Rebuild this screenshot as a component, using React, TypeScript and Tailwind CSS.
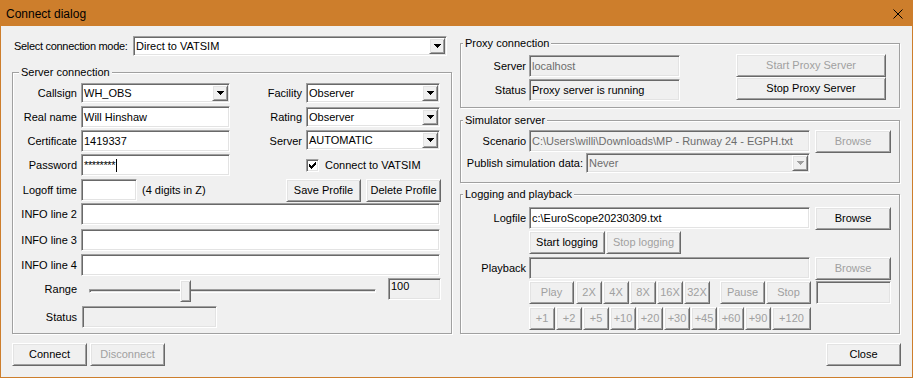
import type { ReactNode } from "react";

// classic win32 3d edges
const sunken =
  "border border-t-[#a0a0a0] border-l-[#a0a0a0] border-r-white border-b-white shadow-[inset_1px_1px_0_#696969,inset_-1px_-1px_0_#e3e3e3]";
const raised =
  "border border-t-white border-l-white border-r-[#696969] border-b-[#696969] shadow-[inset_1px_1px_0_#e3e3e3,inset_-1px_-1px_0_#a0a0a0]";

function Arrow({ dim }: { dim?: boolean }) {
  return (
    <svg width="7" height="4" viewBox="0 0 7 4" shapeRendering="crispEdges">
      <path d="M0 0h7v1H0zM1 1h5v1H1zM2 2h3v1H2zM3 3h1v1H3z" fill={dim ? "#a0a0a0" : "#000"} />
    </svg>
  );
}

function Edit({
  className = "",
  value = "",
  mode = "normal",
  children,
}: {
  className?: string;
  value?: string;
  mode?: "normal" | "disabled" | "readonly";
  children?: ReactNode;
}) {
  const look =
    mode === "normal" ? "bg-white" : mode === "disabled" ? "bg-[#f0f0f0] text-[#6d6d6d]" : "bg-[#f0f0f0]";
  return (
    <div className={`${sunken} ${look} h-[22px] flex items-center pl-[2px] whitespace-nowrap overflow-hidden ${className}`}>
      {value}
      {children}
    </div>
  );
}

function Combo({ className = "", value, disabled }: { className?: string; value: string; disabled?: boolean }) {
  return (
    <div
      className={`${sunken} ${disabled ? "bg-[#f0f0f0] text-[#6d6d6d]" : "bg-white"} h-[20px] flex p-[1px] ${className}`}
    >
      <div className="flex-1 flex items-center pl-[1px] whitespace-nowrap overflow-hidden">{value}</div>
      <div className={`${raised} w-[16px] bg-[#f0f0f0] flex items-center justify-center`}>
        <Arrow dim={disabled} />
      </div>
    </div>
  );
}

function Btn({ className = "", label, disabled }: { className?: string; label: string; disabled?: boolean }) {
  return (
    <button
      type="button"
      disabled={disabled}
      className={`${raised} h-[23px] bg-[#f0f0f0] flex items-center justify-center whitespace-nowrap shrink-0 ${
        disabled ? "text-[#a0a0a0]" : "text-black"
      } ${className}`}
    >
      {label}
    </button>
  );
}

function Group({
  title,
  className = "",
  legend,
  children,
}: {
  title: string;
  className?: string;
  legend: string;
  children: ReactNode;
}) {
  return (
    <div className={`relative border border-[#a0a0a0] shadow-[inset_1px_1px_0_#fff,1px_1px_0_#fff] ${className}`}>
      <span className={`absolute -top-[7px] ${legend} px-[2px] bg-[#f0f0f0] leading-[13px] whitespace-nowrap`}>
        {title}
      </span>
      {children}
    </div>
  );
}

function Lbl({ className = "", children }: { className?: string; children: ReactNode }) {
  return <span className={`text-right whitespace-nowrap self-center shrink-0 ${className}`}>{children}</span>;
}

export default function App() {
  return (
    <div className="w-[913px] h-[378px] flex flex-col font-['Liberation_Sans',Arial,sans-serif] text-[11px] leading-[13px] text-black select-none">
      <div className="h-[26px] shrink-0 bg-[#cd7e2c] flex items-center justify-between pl-[6px] pr-[10px]">
        <span className="text-[12px] pt-[2px]">Connect dialog</span>
        <svg width="10" height="10" viewBox="0 0 10 10" className="mt-[2px]">
          <path d="M0.5 0.5L9.5 9.5M9.5 0.5L0.5 9.5" stroke="#000" strokeWidth="1" />
        </svg>
      </div>

      <div className="flex-1 bg-[#f0f0f0] border-x border-b border-[#cd7e2c] flex pl-[11px] pr-[12px] gap-[8px]">
        {/* left column */}
        <div className="w-[440px] flex flex-col">
          <div className="mt-[10px] flex items-center h-[20px]">
            <span className="w-[121px] shrink-0 pl-[2px] whitespace-nowrap tracking-[-0.3px]">Select connection mode:</span>
            <Combo className="w-[314px]" value="Direct to VATSIM" />
          </div>

          <Group title="Server connection" className="mt-[16px] h-[262px]" legend="left-[6px]">
            <div className="mt-[10px] flex h-[20px]">
              <Lbl className="w-[64px] mr-[4px]">Callsign</Lbl>
              <Combo className="w-[149px]" value="WH_OBS" />
              <Lbl className="w-[72px] mr-[4px]">Facility</Lbl>
              <Combo className="w-[134px]" value="Observer" />
            </div>
            <div className="mt-[3px] flex items-start h-[22px]">
              <Lbl className="w-[64px] mr-[4px]">Real name</Lbl>
              <Edit className="w-[149px]" value="Will Hinshaw" />
              <Lbl className="w-[72px] mr-[4px]">Rating</Lbl>
              <Combo className="w-[134px] mt-[1px]" value="Observer" />
            </div>
            <div className="mt-[2px] flex items-start h-[22px]">
              <Lbl className="w-[64px] mr-[4px]">Certificate</Lbl>
              <Edit className="w-[149px]" value="1419337" />
              <Lbl className="w-[72px] mr-[4px]">Server</Lbl>
              <Combo className="w-[134px]" value="AUTOMATIC" />
            </div>
            <div className="mt-[2px] flex items-center h-[22px]">
              <Lbl className="w-[64px] mr-[4px]">Password</Lbl>
              <Edit className="w-[149px]">
                <span className="tracking-[-0.4px]">********</span>
                <span className="w-[1px] h-[13px] bg-black ml-[1px]" />
              </Edit>
              <div className={`${sunken} ml-[76px] w-[13px] h-[13px] bg-white flex items-center justify-center`}>
                <svg width="7" height="7" viewBox="0 0 7 7" shapeRendering="crispEdges">
                  <path
                    d="M6 0h1v3H6zM5 1h1v3H5zM4 2h1v3H4zM3 3h1v3H3zM2 4h1v3H2zM1 3h1v3H1zM0 2h1v3H0z"
                    fill="#000"
                  />
                </svg>
              </div>
              <span className="ml-[6px] whitespace-nowrap">Connect to VATSIM</span>
            </div>
            <div className="mt-[3px] flex items-start h-[23px] pr-[10px]">
              <Lbl className="w-[64px] mr-[4px]">Logoff time</Lbl>
              <Edit className="w-[56px]" />
              <span className="ml-[5px] self-center whitespace-nowrap">(4 digits in Z)</span>
              <Btn className="ml-auto w-[75px]" label="Save Profile" />
              <Btn className="ml-[5px] w-[75px]" label="Delete Profile" />
            </div>
            <div className="mt-[1px] flex h-[22px]">
              <Lbl className="w-[64px] mr-[4px]">INFO line 2</Lbl>
              <Edit className="w-[359px]" />
            </div>
            <div className="mt-[4px] flex h-[22px]">
              <Lbl className="w-[64px] mr-[4px]">INFO line 3</Lbl>
              <Edit className="w-[359px]" />
            </div>
            <div className="mt-[3px] flex h-[22px]">
              <Lbl className="w-[64px] mr-[4px]">INFO line 4</Lbl>
              <Edit className="w-[359px]" />
            </div>
            <div className="mt-[2px] flex items-start h-[22px]">
              <Lbl className="w-[64px] mr-[4px]">Range</Lbl>
              <div className="relative w-[300px] h-[24px] flex items-start">
                <div className={`${sunken} ml-[8px] mt-[11px] w-[287px] h-[4px]`} />
                <div className={`${raised} absolute left-[99px] top-[2px] w-[11px] h-[22px] bg-[#f0f0f0]`} />
              </div>
              <div className={`${sunken} ml-[7px] w-[53px] h-[22px] bg-[#f0f0f0] pl-[2px] pt-[1px]`}>100</div>
            </div>
            <div className="mt-[6px] flex h-[22px]">
              <Lbl className="w-[64px] mr-[5px]">Status</Lbl>
              <Edit className="w-[135px]" mode="readonly" />
            </div>
          </Group>

          <div className="mt-[9px] flex gap-[3px]">
            <Btn className="w-[75px]" label="Connect" />
            <Btn className="w-[75px]" label="Disconnect" disabled />
          </div>
        </div>

        {/* right column */}
        <div className="w-[440px] flex flex-col">
          <Group title="Proxy connection" className="mt-[17px] h-[65px] flex items-start" legend="left-[2px]">
            <div className="mt-[11px] flex flex-col">
              <div className="flex h-[22px]">
                <Lbl className="w-[65px] mr-[3px]">Server</Lbl>
                <Edit className="w-[151px]" mode="disabled" value="localhost" />
              </div>
              <div className="mt-[2px] flex h-[22px]">
                <Lbl className="w-[65px] mr-[3px]">Status</Lbl>
                <Edit className="w-[151px]" mode="readonly" value="Proxy server is running" />
              </div>
            </div>
            <div className="mt-[10px] ml-[56px] flex flex-col">
              <Btn className="w-[150px]" label="Start Proxy Server" disabled />
              <Btn className="w-[150px]" label="Stop Proxy Server" />
            </div>
          </Group>

          <Group title="Simulator server" className="mt-[12px] h-[63px]" legend="left-[2px]">
            <div className="mt-[9px] flex items-start h-[23px]">
              <Lbl className="w-[65px] mr-[3px]">Scenario</Lbl>
              <Edit
                className="w-[281px]"
                mode="disabled"
                value={"C:\\Users\\willi\\Downloads\\MP - Runway 24 - EGPH.txt"}
              />
              <Btn className="ml-[5px] w-[76px]" label="Browse" disabled />
            </div>
            <div className="flex h-[20px]">
              <Lbl className="w-[122px] mr-[3px]">Publish simulation data:</Lbl>
              <Combo className="w-[224px]" value="Never" disabled />
            </div>
          </Group>

          <Group title="Logging and playback" className="mt-[11px] h-[140px]" legend="left-[2px]">
            <div className="mt-[12px] flex items-start h-[23px]">
              <Lbl className="w-[65px] mr-[3px]">Logfile</Lbl>
              <Edit className="w-[281px]" value={"c:\\EuroScope20230309.txt"} />
              <Btn className="ml-[5px] w-[76px]" label="Browse" />
            </div>
            <div className="mt-[1px] pl-[68px] flex h-[23px]">
              <Btn className="w-[76px]" label="Start logging" />
              <Btn className="ml-[1px] w-[75px]" label="Stop logging" disabled />
            </div>
            <div className="mt-[3px] flex items-start h-[23px]">
              <Lbl className="w-[65px] mr-[3px]">Playback</Lbl>
              <Edit className="w-[281px]" mode="disabled" />
              <Btn className="ml-[5px] w-[76px]" label="Browse" disabled />
            </div>
            <div className="mt-[1px] pl-[68px] flex items-start h-[23px]">
              <Btn className="w-[45px]" label="Play" disabled />
              <Btn className="ml-[2px] w-[26px]" label="2X" disabled />
              <Btn className="ml-[1px] w-[26px]" label="4X" disabled />
              <Btn className="ml-[1px] w-[26px]" label="8X" disabled />
              <Btn className="ml-[1px] w-[26px]" label="16X" disabled />
              <Btn className="ml-[1px] w-[26px]" label="32X" disabled />
              <Btn className="ml-[10px] w-[45px]" label="Pause" disabled />
              <Btn className="ml-[1px] w-[45px]" label="Stop" disabled />
              <div className={`${sunken} ml-[5px] w-[75px] h-[23px] bg-[#f0f0f0]`} />
            </div>
            <div className="mt-[3px] pl-[68px] flex h-[23px]">
              {["+1", "+2", "+5", "+10", "+20", "+30", "+45", "+60", "+90"].map((s, i) => (
                <Btn key={s} className={i === 0 ? "w-[26px]" : "ml-[1px] w-[26px]"} label={s} disabled />
              ))}
              <Btn className="ml-[1px] w-[39px]" label="+120" disabled />
            </div>
          </Group>

          <div className="mt-[9px] flex justify-end -mr-px">
            <Btn className="w-[75px]" label="Close" />
          </div>
        </div>
      </div>
    </div>
  );
}
